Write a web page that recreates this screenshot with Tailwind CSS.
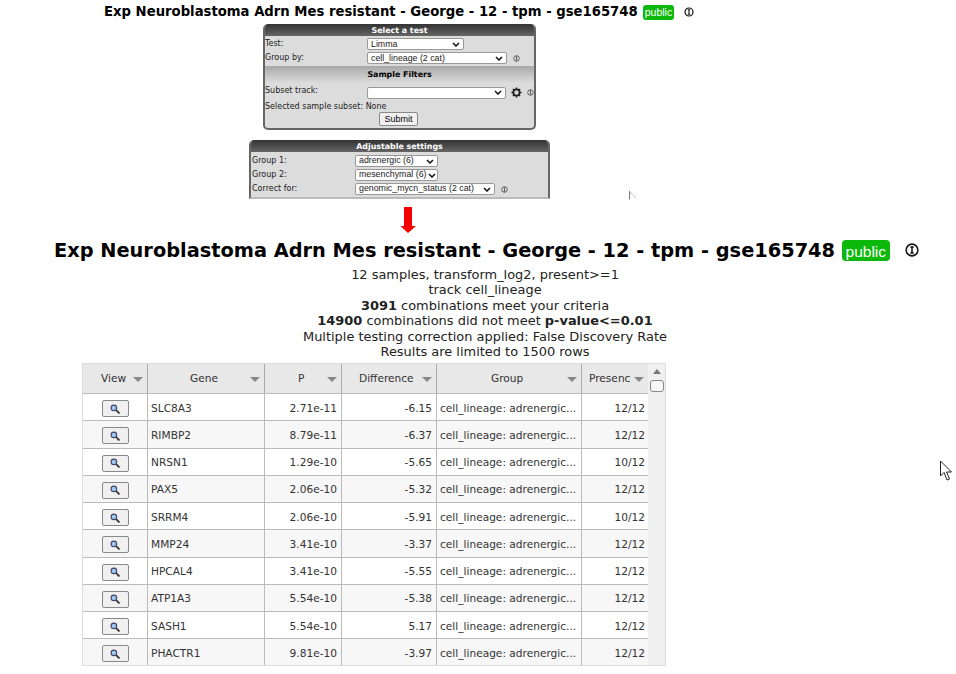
<!DOCTYPE html>
<html><head><meta charset="utf-8"><script src="https://cdn.jsdelivr.net/npm/@tailwindcss/browser@4"></script></head>
<body class="bg-white">
<div class="relative w-[956px] h-[674px] overflow-hidden bg-white text-[#222] font-['DejaVu_Sans',sans-serif]">

<div class="h-[24px] pl-[104px] flex items-center text-[13.23px] font-bold text-black whitespace-nowrap">
  <span>Exp Neuroblastoma Adrn Mes resistant - George - 12 - tpm - gse165748</span>
  <span class="ml-[5px] h-[15px] px-[2px] rounded-[3px] bg-[#0bb80b] text-white font-normal text-[10.5px] leading-[15px] font-['Liberation_Sans',sans-serif]">public</span>
  <svg class="ml-[10px]" width="10" height="10" viewBox="0 0 10 10"><circle cx="5" cy="5" r="4" fill="none" stroke="#111" stroke-width="1.2"/><path d="M5 2.5V7.5M3.8 2.8H6.2M3.8 7.2H6.2" stroke="#111" stroke-width="1.1" fill="none"/></svg>
</div>

<div class="ml-[263px] w-[273px] h-[106px] rounded-[5px] border-2 border-t-0 border-[#666] bg-[#dcdcdc] text-[8px] leading-[14px] overflow-hidden">
  <div class="h-[12px] -mx-[2px] bg-gradient-to-b from-[#333] to-[#666] text-white font-bold text-center text-[7.9px] leading-[14px]">Select a test</div>
  <div class="h-[14px] flex items-center mt-[1px]">
    <span class="w-[102px]">Test:</span>
    <div class="w-[97px] h-[12px] bg-white border border-[#999] rounded-[2px] flex items-center justify-between px-[3px] text-[8.8px] font-['Liberation_Sans',sans-serif]">Limma<svg width="8" height="5" viewBox="0 0 8 5"><path d="M1 1L4 4L7 1" fill="none" stroke="#111" stroke-width="1.5"/></svg></div>
  </div>
  <div class="h-[14px] flex items-center">
    <span class="w-[102px]">Group by:</span>
    <div class="w-[140px] h-[12px] bg-white border border-[#999] rounded-[2px] flex items-center justify-between px-[3px] text-[8.8px] font-['Liberation_Sans',sans-serif]">cell_lineage (2 cat)<svg width="8" height="5" viewBox="0 0 8 5"><path d="M1 1L4 4L7 1" fill="none" stroke="#111" stroke-width="1.5"/></svg></div>
    <svg class="ml-[6px]" width="7" height="7" viewBox="0 0 10 10"><circle cx="5" cy="5" r="4" fill="none" stroke="#333" stroke-width="1"/><path d="M5 2.5V7.5M3.8 2.8H6.2M3.8 7.2H6.2" stroke="#333" stroke-width="1" fill="none"/></svg>
  </div>
  <div class="h-[17px] mt-[1px] bg-gradient-to-b from-[#a8a8a8] to-[#dcdcdc] text-black font-bold text-center text-[7.9px] leading-[17px]">Sample Filters</div>
  <div class="h-[19px] flex items-center">
    <span class="w-[102px] -mt-[3px]">Subset track:</span>
    <div class="w-[140px] h-[12px] bg-white border border-[#999] rounded-[2px] flex items-center justify-end px-[3px]"><svg width="8" height="5" viewBox="0 0 8 5"><path d="M1 1L4 4L7 1" fill="none" stroke="#111" stroke-width="1.5"/></svg></div>
    <svg class="ml-[5px] -mt-[1px]" width="11" height="11" viewBox="0 0 12 12"><circle cx="6" cy="6" r="3.4" fill="none" stroke="#222" stroke-width="2"/><path d="M6 .5V2.5M6 9.5V11.5M.5 6H2.5M9.5 6H11.5M2.1 2.1L3.5 3.5M8.5 8.5L9.9 9.9M2.1 9.9L3.5 8.5M8.5 3.5L9.9 2.1" stroke="#222" stroke-width="1.6"/></svg>
    <svg class="ml-[5px]" width="7" height="7" viewBox="0 0 10 10"><circle cx="5" cy="5" r="4" fill="none" stroke="#333" stroke-width="1"/><path d="M5 2.5V7.5M3.8 2.8H6.2M3.8 7.2H6.2" stroke="#333" stroke-width="1" fill="none"/></svg>
  </div>
  <div class="h-[9px] whitespace-nowrap flex items-center">Selected sample subset: None</div>
  <div class="flex justify-center -ml-[2px] mt-[1px]"><div class="w-[39px] h-[14px] bg-[#f0f0f0] border border-[#888] rounded-[2px] text-center text-[9px] leading-[12px] text-black font-['Liberation_Sans',sans-serif]">Submit</div></div>
</div>

<div class="ml-[249px] mt-[10px] w-[301px] h-[59px] rounded-t-[5px] border-x-2 border-b-2 border-[#666] border-b-[#bbb] bg-[#dcdcdc] text-[8px] overflow-hidden">
  <div class="h-[12px] -mx-[2px] bg-gradient-to-b from-[#333] to-[#666] text-white font-bold text-center text-[7.9px] leading-[14px]">Adjustable settings</div>
  <div class="h-[14px] flex items-center mt-[2px]">
    <span class="w-[104px] pl-[1px]">Group 1:</span>
    <div class="w-[83px] h-[12px] bg-white border border-[#999] rounded-[2px] flex items-center justify-between px-[3px] text-[8.8px] font-['Liberation_Sans',sans-serif]">adrenergic (6)<svg width="8" height="5" viewBox="0 0 8 5"><path d="M1 1L4 4L7 1" fill="none" stroke="#111" stroke-width="1.5"/></svg></div>
  </div>
  <div class="h-[14px] flex items-center">
    <span class="w-[104px] pl-[1px]">Group 2:</span>
    <div class="w-[83px] h-[12px] bg-white border border-[#999] rounded-[2px] flex items-center justify-between pl-[3px] pr-[1px] text-[8.8px] font-['Liberation_Sans',sans-serif] whitespace-nowrap">mesenchymal (6)<svg width="8" height="5" viewBox="0 0 8 5"><path d="M1 1L4 4L7 1" fill="none" stroke="#111" stroke-width="1.5"/></svg></div>
  </div>
  <div class="h-[14px] flex items-center">
    <span class="w-[104px] pl-[1px]">Correct for:</span>
    <div class="w-[140px] h-[12px] bg-white border border-[#999] rounded-[2px] flex items-center justify-between px-[3px] text-[8.8px] font-['Liberation_Sans',sans-serif] whitespace-nowrap">genomic_mycn_status (2 cat)<svg width="8" height="5" viewBox="0 0 8 5"><path d="M1 1L4 4L7 1" fill="none" stroke="#111" stroke-width="1.5"/></svg></div>
    <svg class="ml-[6px]" width="7" height="7" viewBox="0 0 10 10"><circle cx="5" cy="5" r="4" fill="none" stroke="#333" stroke-width="1"/><path d="M5 2.5V7.5M3.8 2.8H6.2M3.8 7.2H6.2" stroke="#333" stroke-width="1" fill="none"/></svg>
  </div>
</div>

<div class="mt-[8px] ml-[400px] h-[26px]">
  <svg width="16" height="26" viewBox="0 0 16 26"><path d="M4 0H12V19H16L8 26L0.5 19H4Z" fill="#f40000"/></svg>
</div>

<div class="mt-[4px] h-[26px] pl-[54px] flex items-center text-[19.35px] font-bold text-black whitespace-nowrap">
  <span>Exp Neuroblastoma Adrn Mes resistant - George - 12 - tpm - gse165748</span>
  <span class="ml-[7px] h-[21px] px-[3.5px] rounded-[4px] bg-[#0bb80b] text-white font-normal text-[15.5px] leading-[23px] font-['Liberation_Sans',sans-serif]">public</span>
  <svg class="ml-[15px]" width="14" height="14" viewBox="0 0 10 10"><circle cx="5" cy="5" r="4.2" fill="none" stroke="#111" stroke-width="1.1"/><path d="M5 2.5V7.5M3.8 2.8H6.2M3.8 7.2H6.2" stroke="#111" stroke-width="1.1" fill="none"/></svg>
</div>

<div class="mt-[4px] w-[970px] text-center text-[12.95px] leading-[15.4px]">
  <div>12 samples, transform_log2, present&gt;=1</div>
  <div>track cell_lineage</div>
  <div><b>3091</b> combinations meet your criteria</div>
  <div><b>14900</b> combinations did not meet <b>p-value&lt;=0.01</b></div>
  <div>Multiple testing correction applied: False Discovery Rate</div>
  <div>Results are limited to 1500 rows</div>
</div>

<div class="absolute left-[82px] top-[363px] w-[584px] h-[303px] border border-[#ddd] flex overflow-hidden text-[10.6px] text-[#333]">
  <div class="w-[565px]">
    <div class="h-[30px] bg-[#e8e8e8] grid grid-cols-[65px_117px_77px_95px_145px_66px] border-b border-[#bbb] text-[#333]">
      <div class="border-r border-[#aaa] flex items-center pl-[18px] relative">View<i class="absolute right-[4px] top-[13px] border-x-[5px] border-t-[5px] border-x-transparent border-t-[#888]"></i></div>
      <div class="border-r border-[#aaa] flex items-center pl-[42px] relative">Gene<i class="absolute right-[4px] top-[13px] border-x-[5px] border-t-[5px] border-x-transparent border-t-[#888]"></i></div>
      <div class="border-r border-[#aaa] flex items-center pl-[33px] relative">P<i class="absolute right-[4px] top-[13px] border-x-[5px] border-t-[5px] border-x-transparent border-t-[#888]"></i></div>
      <div class="border-r border-[#aaa] flex items-center pl-[17px] relative">Difference<i class="absolute right-[4px] top-[13px] border-x-[5px] border-t-[5px] border-x-transparent border-t-[#888]"></i></div>
      <div class="border-r border-[#aaa] flex items-center pl-[54px] relative">Group<i class="absolute right-[4px] top-[13px] border-x-[5px] border-t-[5px] border-x-transparent border-t-[#888]"></i></div>
      <div class="flex items-center pl-[7px] relative overflow-hidden">Presenc<i class="absolute right-[4px] top-[13px] border-x-[5px] border-t-[5px] border-x-transparent border-t-[#888]"></i></div>
    </div>

    <div class="h-[27.25px] pt-[3px] grid grid-cols-[65px_117px_77px_95px_145px_66px] border-b border-[#bbb] bg-white">
      <div class="border-r border-[#bbb] -mt-[3px] pt-[3px] flex items-center justify-center"><div class="w-[27px] h-[17px] border border-[#888] rounded-[2px] bg-[#f0f0f0] flex items-center justify-center"><svg width="10" height="10" viewBox="0 0 9 9"><circle cx="3.5" cy="3.5" r="2.5" fill="#9cc9ee" stroke="#446"/><path d="M5.5 5.5L8.5 8.5" stroke="#333" stroke-width="1.6"/></svg></div></div>
      <div class="border-r border-[#bbb] -mt-[3px] pt-[3px] flex items-center pl-[3px]">SLC8A3</div>
      <div class="border-r border-[#bbb] -mt-[3px] pt-[3px] flex items-center justify-end pr-[4px]">2.71e-11</div>
      <div class="border-r border-[#bbb] -mt-[3px] pt-[3px] flex items-center justify-end pr-[4px]">-6.15</div>
      <div class="border-r border-[#bbb] -mt-[3px] pt-[3px] flex items-center pl-[3px] whitespace-nowrap">cell_lineage: adrenergic...</div>
      <div class="flex items-center justify-end pr-[3px]">12/12</div>
    </div>
    <div class="h-[27.25px] pt-[3px] grid grid-cols-[65px_117px_77px_95px_145px_66px] border-b border-[#bbb] bg-[#f7f7f7]">
      <div class="border-r border-[#bbb] -mt-[3px] pt-[3px] flex items-center justify-center"><div class="w-[27px] h-[17px] border border-[#888] rounded-[2px] bg-[#f0f0f0] flex items-center justify-center"><svg width="10" height="10" viewBox="0 0 9 9"><circle cx="3.5" cy="3.5" r="2.5" fill="#9cc9ee" stroke="#446"/><path d="M5.5 5.5L8.5 8.5" stroke="#333" stroke-width="1.6"/></svg></div></div>
      <div class="border-r border-[#bbb] -mt-[3px] pt-[3px] flex items-center pl-[3px]">RIMBP2</div>
      <div class="border-r border-[#bbb] -mt-[3px] pt-[3px] flex items-center justify-end pr-[4px]">8.79e-11</div>
      <div class="border-r border-[#bbb] -mt-[3px] pt-[3px] flex items-center justify-end pr-[4px]">-6.37</div>
      <div class="border-r border-[#bbb] -mt-[3px] pt-[3px] flex items-center pl-[3px] whitespace-nowrap">cell_lineage: adrenergic...</div>
      <div class="flex items-center justify-end pr-[3px]">12/12</div>
    </div>
    <div class="h-[27.25px] pt-[3px] grid grid-cols-[65px_117px_77px_95px_145px_66px] border-b border-[#bbb] bg-white">
      <div class="border-r border-[#bbb] -mt-[3px] pt-[3px] flex items-center justify-center"><div class="w-[27px] h-[17px] border border-[#888] rounded-[2px] bg-[#f0f0f0] flex items-center justify-center"><svg width="10" height="10" viewBox="0 0 9 9"><circle cx="3.5" cy="3.5" r="2.5" fill="#9cc9ee" stroke="#446"/><path d="M5.5 5.5L8.5 8.5" stroke="#333" stroke-width="1.6"/></svg></div></div>
      <div class="border-r border-[#bbb] -mt-[3px] pt-[3px] flex items-center pl-[3px]">NRSN1</div>
      <div class="border-r border-[#bbb] -mt-[3px] pt-[3px] flex items-center justify-end pr-[4px]">1.29e-10</div>
      <div class="border-r border-[#bbb] -mt-[3px] pt-[3px] flex items-center justify-end pr-[4px]">-5.65</div>
      <div class="border-r border-[#bbb] -mt-[3px] pt-[3px] flex items-center pl-[3px] whitespace-nowrap">cell_lineage: adrenergic...</div>
      <div class="flex items-center justify-end pr-[3px]">10/12</div>
    </div>
    <div class="h-[27.25px] pt-[3px] grid grid-cols-[65px_117px_77px_95px_145px_66px] border-b border-[#bbb] bg-[#f7f7f7]">
      <div class="border-r border-[#bbb] -mt-[3px] pt-[3px] flex items-center justify-center"><div class="w-[27px] h-[17px] border border-[#888] rounded-[2px] bg-[#f0f0f0] flex items-center justify-center"><svg width="10" height="10" viewBox="0 0 9 9"><circle cx="3.5" cy="3.5" r="2.5" fill="#9cc9ee" stroke="#446"/><path d="M5.5 5.5L8.5 8.5" stroke="#333" stroke-width="1.6"/></svg></div></div>
      <div class="border-r border-[#bbb] -mt-[3px] pt-[3px] flex items-center pl-[3px]">PAX5</div>
      <div class="border-r border-[#bbb] -mt-[3px] pt-[3px] flex items-center justify-end pr-[4px]">2.06e-10</div>
      <div class="border-r border-[#bbb] -mt-[3px] pt-[3px] flex items-center justify-end pr-[4px]">-5.32</div>
      <div class="border-r border-[#bbb] -mt-[3px] pt-[3px] flex items-center pl-[3px] whitespace-nowrap">cell_lineage: adrenergic...</div>
      <div class="flex items-center justify-end pr-[3px]">12/12</div>
    </div>
    <div class="h-[27.25px] pt-[3px] grid grid-cols-[65px_117px_77px_95px_145px_66px] border-b border-[#bbb] bg-white">
      <div class="border-r border-[#bbb] -mt-[3px] pt-[3px] flex items-center justify-center"><div class="w-[27px] h-[17px] border border-[#888] rounded-[2px] bg-[#f0f0f0] flex items-center justify-center"><svg width="10" height="10" viewBox="0 0 9 9"><circle cx="3.5" cy="3.5" r="2.5" fill="#9cc9ee" stroke="#446"/><path d="M5.5 5.5L8.5 8.5" stroke="#333" stroke-width="1.6"/></svg></div></div>
      <div class="border-r border-[#bbb] -mt-[3px] pt-[3px] flex items-center pl-[3px]">SRRM4</div>
      <div class="border-r border-[#bbb] -mt-[3px] pt-[3px] flex items-center justify-end pr-[4px]">2.06e-10</div>
      <div class="border-r border-[#bbb] -mt-[3px] pt-[3px] flex items-center justify-end pr-[4px]">-5.91</div>
      <div class="border-r border-[#bbb] -mt-[3px] pt-[3px] flex items-center pl-[3px] whitespace-nowrap">cell_lineage: adrenergic...</div>
      <div class="flex items-center justify-end pr-[3px]">10/12</div>
    </div>
    <div class="h-[27.25px] pt-[3px] grid grid-cols-[65px_117px_77px_95px_145px_66px] border-b border-[#bbb] bg-[#f7f7f7]">
      <div class="border-r border-[#bbb] -mt-[3px] pt-[3px] flex items-center justify-center"><div class="w-[27px] h-[17px] border border-[#888] rounded-[2px] bg-[#f0f0f0] flex items-center justify-center"><svg width="10" height="10" viewBox="0 0 9 9"><circle cx="3.5" cy="3.5" r="2.5" fill="#9cc9ee" stroke="#446"/><path d="M5.5 5.5L8.5 8.5" stroke="#333" stroke-width="1.6"/></svg></div></div>
      <div class="border-r border-[#bbb] -mt-[3px] pt-[3px] flex items-center pl-[3px]">MMP24</div>
      <div class="border-r border-[#bbb] -mt-[3px] pt-[3px] flex items-center justify-end pr-[4px]">3.41e-10</div>
      <div class="border-r border-[#bbb] -mt-[3px] pt-[3px] flex items-center justify-end pr-[4px]">-3.37</div>
      <div class="border-r border-[#bbb] -mt-[3px] pt-[3px] flex items-center pl-[3px] whitespace-nowrap">cell_lineage: adrenergic...</div>
      <div class="flex items-center justify-end pr-[3px]">12/12</div>
    </div>
    <div class="h-[27.25px] pt-[3px] grid grid-cols-[65px_117px_77px_95px_145px_66px] border-b border-[#bbb] bg-white">
      <div class="border-r border-[#bbb] -mt-[3px] pt-[3px] flex items-center justify-center"><div class="w-[27px] h-[17px] border border-[#888] rounded-[2px] bg-[#f0f0f0] flex items-center justify-center"><svg width="10" height="10" viewBox="0 0 9 9"><circle cx="3.5" cy="3.5" r="2.5" fill="#9cc9ee" stroke="#446"/><path d="M5.5 5.5L8.5 8.5" stroke="#333" stroke-width="1.6"/></svg></div></div>
      <div class="border-r border-[#bbb] -mt-[3px] pt-[3px] flex items-center pl-[3px]">HPCAL4</div>
      <div class="border-r border-[#bbb] -mt-[3px] pt-[3px] flex items-center justify-end pr-[4px]">3.41e-10</div>
      <div class="border-r border-[#bbb] -mt-[3px] pt-[3px] flex items-center justify-end pr-[4px]">-5.55</div>
      <div class="border-r border-[#bbb] -mt-[3px] pt-[3px] flex items-center pl-[3px] whitespace-nowrap">cell_lineage: adrenergic...</div>
      <div class="flex items-center justify-end pr-[3px]">12/12</div>
    </div>
    <div class="h-[27.25px] pt-[3px] grid grid-cols-[65px_117px_77px_95px_145px_66px] border-b border-[#bbb] bg-[#f7f7f7]">
      <div class="border-r border-[#bbb] -mt-[3px] pt-[3px] flex items-center justify-center"><div class="w-[27px] h-[17px] border border-[#888] rounded-[2px] bg-[#f0f0f0] flex items-center justify-center"><svg width="10" height="10" viewBox="0 0 9 9"><circle cx="3.5" cy="3.5" r="2.5" fill="#9cc9ee" stroke="#446"/><path d="M5.5 5.5L8.5 8.5" stroke="#333" stroke-width="1.6"/></svg></div></div>
      <div class="border-r border-[#bbb] -mt-[3px] pt-[3px] flex items-center pl-[3px]">ATP1A3</div>
      <div class="border-r border-[#bbb] -mt-[3px] pt-[3px] flex items-center justify-end pr-[4px]">5.54e-10</div>
      <div class="border-r border-[#bbb] -mt-[3px] pt-[3px] flex items-center justify-end pr-[4px]">-5.38</div>
      <div class="border-r border-[#bbb] -mt-[3px] pt-[3px] flex items-center pl-[3px] whitespace-nowrap">cell_lineage: adrenergic...</div>
      <div class="flex items-center justify-end pr-[3px]">12/12</div>
    </div>
    <div class="h-[27.25px] pt-[3px] grid grid-cols-[65px_117px_77px_95px_145px_66px] border-b border-[#bbb] bg-white">
      <div class="border-r border-[#bbb] -mt-[3px] pt-[3px] flex items-center justify-center"><div class="w-[27px] h-[17px] border border-[#888] rounded-[2px] bg-[#f0f0f0] flex items-center justify-center"><svg width="10" height="10" viewBox="0 0 9 9"><circle cx="3.5" cy="3.5" r="2.5" fill="#9cc9ee" stroke="#446"/><path d="M5.5 5.5L8.5 8.5" stroke="#333" stroke-width="1.6"/></svg></div></div>
      <div class="border-r border-[#bbb] -mt-[3px] pt-[3px] flex items-center pl-[3px]">SASH1</div>
      <div class="border-r border-[#bbb] -mt-[3px] pt-[3px] flex items-center justify-end pr-[4px]">5.54e-10</div>
      <div class="border-r border-[#bbb] -mt-[3px] pt-[3px] flex items-center justify-end pr-[4px]">5.17</div>
      <div class="border-r border-[#bbb] -mt-[3px] pt-[3px] flex items-center pl-[3px] whitespace-nowrap">cell_lineage: adrenergic...</div>
      <div class="flex items-center justify-end pr-[3px]">12/12</div>
    </div>
    <div class="h-[27.25px] pt-[3px] grid grid-cols-[65px_117px_77px_95px_145px_66px] border-b border-[#bbb] bg-[#f7f7f7]">
      <div class="border-r border-[#bbb] -mt-[3px] pt-[3px] flex items-center justify-center"><div class="w-[27px] h-[17px] border border-[#888] rounded-[2px] bg-[#f0f0f0] flex items-center justify-center"><svg width="10" height="10" viewBox="0 0 9 9"><circle cx="3.5" cy="3.5" r="2.5" fill="#9cc9ee" stroke="#446"/><path d="M5.5 5.5L8.5 8.5" stroke="#333" stroke-width="1.6"/></svg></div></div>
      <div class="border-r border-[#bbb] -mt-[3px] pt-[3px] flex items-center pl-[3px]">PHACTR1</div>
      <div class="border-r border-[#bbb] -mt-[3px] pt-[3px] flex items-center justify-end pr-[4px]">9.81e-10</div>
      <div class="border-r border-[#bbb] -mt-[3px] pt-[3px] flex items-center justify-end pr-[4px]">-3.97</div>
      <div class="border-r border-[#bbb] -mt-[3px] pt-[3px] flex items-center pl-[3px] whitespace-nowrap">cell_lineage: adrenergic...</div>
      <div class="flex items-center justify-end pr-[3px]">12/12</div>
    </div>
  </div>
  <div class="flex-1 bg-[#f0f0f0] flex flex-col items-center pt-[5px]">
    <i class="border-x-[4px] border-b-[5px] border-x-transparent border-b-[#777]"></i>
    <div class="mt-[6px] w-[14px] h-[12px] border border-[#888] rounded-[3px] bg-[#f7f7f7]"></div>
  </div>
</div>

<svg class="absolute left-[629px] top-[191px]" width="9" height="9" viewBox="0 0 9 9"><path d="M.5 0V8.5" stroke="#777"/><path d="M1 1L8 8" stroke="#999" stroke-dasharray="1 1"/></svg>
<svg class="absolute left-[939px] top-[460px]" width="14" height="22" viewBox="0 0 14 22"><path d="M1.5 1V16L5 12.5L8 20L10.5 19L7.5 12H12.5Z" fill="#fff" stroke="#222" stroke-width="1"/></svg>
</div>
</body></html>
